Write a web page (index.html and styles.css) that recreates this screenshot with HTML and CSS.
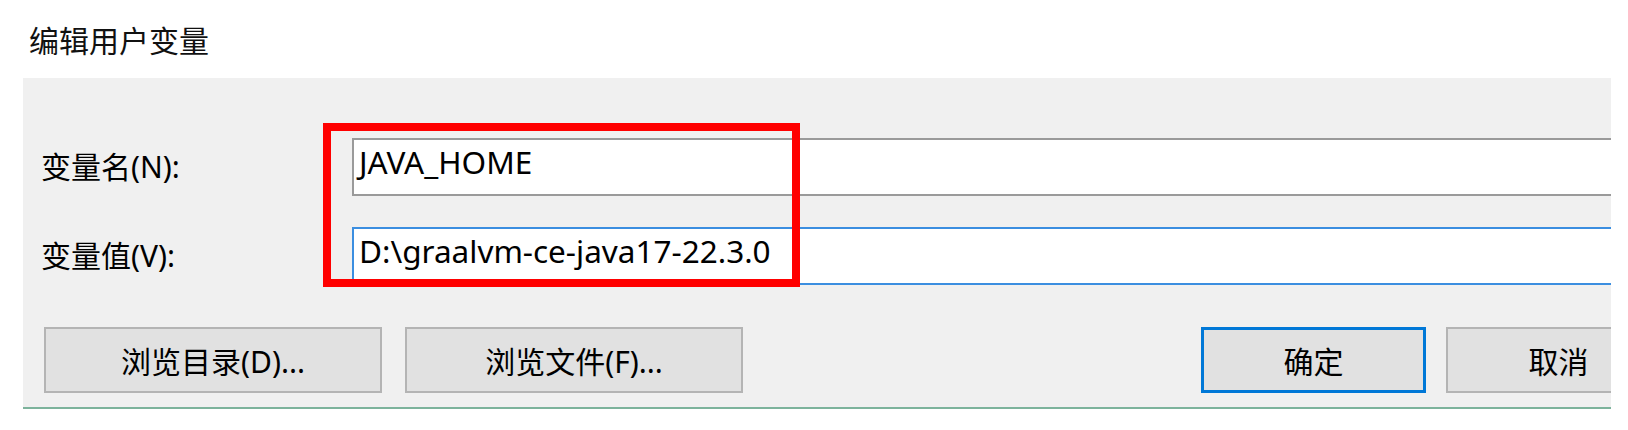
FILE: index.html
```html
<!DOCTYPE html>
<html lang="zh-CN">
<head>
<meta charset="utf-8">
<title>编辑用户变量</title>
<link rel="stylesheet" href="styles.css">
</head>
<body>
  <div class="header"><span class="title">编辑用户变量</span></div>
  <div class="panel">
    <div class="dialog">
      <div class="fields">
        <label class="label">变量名(N):</label>
        <div class="input">JAVA_HOME</div>
        <label class="label">变量值(V):</label>
        <div class="input focused">D:\graalvm-ce-java17-22.3.0</div>
      </div>
      <div class="buttons">
        <div class="group">
          <div class="btn wide">浏览目录(D)...</div>
          <div class="btn wide">浏览文件(F)...</div>
        </div>
        <div class="group right">
          <div class="btn narrow default">确定</div>
          <div class="btn narrow">取消</div>
        </div>
      </div>
    </div>
    <div class="highlight"></div>
  </div>
</body>
</html>
```

FILE: styles.css
```css
html, body {
  margin: 0;
  padding: 0;
  background: #ffffff;
}

body {
  width: 1628px;
  height: 430px;
  overflow: hidden;
  font-family: "Noto Sans", "Noto Sans CJK SC", sans-serif;
  color: #000000;
}

.header {
  height: 78px;
  display: flex;
  align-items: center;
  padding-left: 29px;
  box-sizing: border-box;
}

.title {
  font-size: 30px;
  color: #111111;
}

.panel {
  position: relative;
  margin-left: 23px;
  width: 1588px;
  height: 331px;
  box-sizing: border-box;
  background: #f0f0f0;
  border-bottom: 2px solid #7db39c;
  overflow: hidden;
}

.dialog {
  width: 1669px;
  box-sizing: border-box;
  padding: 60px 21px 0 18px;
}

.fields {
  display: grid;
  grid-template-columns: 311px 1319px;
  grid-auto-rows: 58px;
  row-gap: 31px;
  align-items: center;
}

.label {
  font-size: 30px;
  line-height: 58px;
  white-space: nowrap;
}

.input {
  height: 58px;
  box-sizing: border-box;
  background: #ffffff;
  border: 2px solid #9a9a9a;
  padding-left: 5px;
  font-size: 31.5px;
  line-height: 44px;
  white-space: nowrap;
}

.input.focused {
  border-color: #3b8ee0;
}

.buttons {
  margin-top: 42px;
  margin-left: 3px;
  display: flex;
  justify-content: space-between;
}

.group {
  display: flex;
  gap: 23px;
}

.group.right {
  gap: 20px;
}

.btn {
  height: 66px;
  box-sizing: border-box;
  background: #e1e1e1;
  border: 2px solid #b4b4b4;
  display: flex;
  align-items: center;
  justify-content: center;
  font-size: 30px;
  white-space: nowrap;
}

.btn.wide {
  width: 338px;
}

.btn.narrow {
  width: 225px;
}

.btn.default {
  border: 3px solid #0078d7;
}

.highlight {
  position: absolute;
  left: 300px;
  top: 45px;
  width: 477px;
  height: 164px;
  box-sizing: border-box;
  border: 8px solid #ff0000;
}
```
